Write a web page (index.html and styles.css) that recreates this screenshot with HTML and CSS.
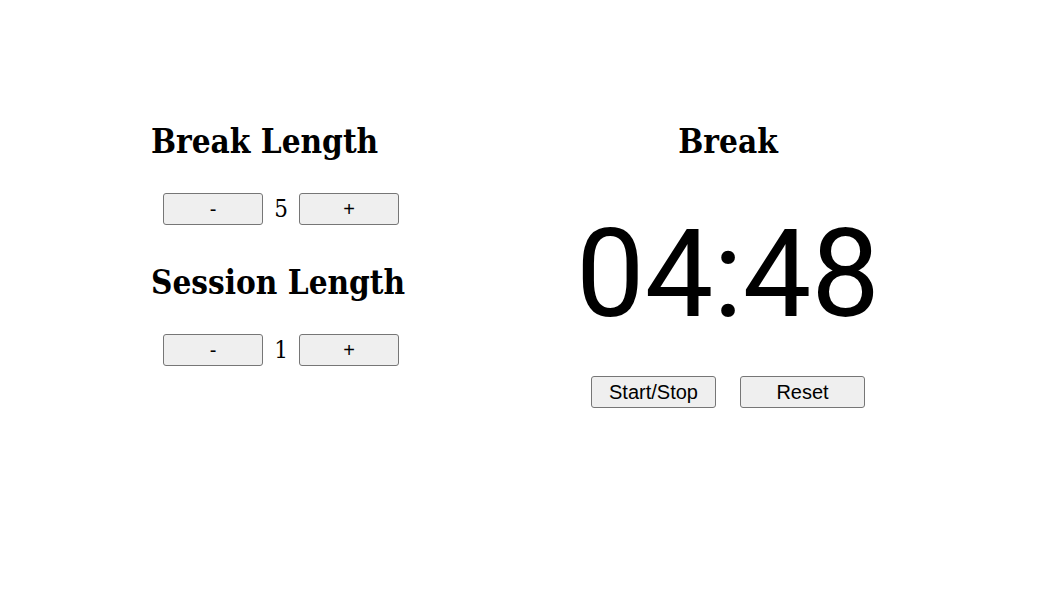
FILE: index.html
```html
<!DOCTYPE html>
<html>
<head>
<meta charset="utf-8">
<link rel="stylesheet" href="styles.css">
</head>
<body>
<main class="app">
  <section class="settings">
    <h2 class="label">Break Length</h2>
    <div class="control">
      <button class="btn small">-</button>
      <span class="value">5</span>
      <button class="btn small">+</button>
    </div>
    <h2 class="label">Session Length</h2>
    <div class="control">
      <button class="btn small">-</button>
      <span class="value">1</span>
      <button class="btn small">+</button>
    </div>
  </section>
  <section class="timer">
    <h2 class="label">Break</h2>
    <div class="time">04:48</div>
    <div class="actions">
      <button class="btn wide">Start/Stop</button>
      <button class="btn wide">Reset</button>
    </div>
  </section>
</main>
</body>
</html>
```
FILE: styles.css
```css
html, body {
  margin: 0;
  padding: 0;
  background: #fff;
}
body {
  font-family: "Roboto Slab", "DejaVu Serif Condensed", "DejaVu Serif", serif;
  font-stretch: condensed;
  color: #000;
}
.app {
  display: flex;
  align-items: flex-start;
  padding: 120px 0 0 151px;
  gap: 157px;
}
.settings {
  width: 260px;
  display: flex;
  flex-direction: column;
}
.label {
  margin: 0;
  font-size: 33px;
  font-weight: bold;
  line-height: 44px;
  white-space: nowrap;
}
.control {
  display: flex;
  align-items: center;
  justify-content: center;
  margin: 29px 0 36px;
}
.control:last-child {
  margin-bottom: 0;
}
.value {
  font-size: 24px;
  width: 36px;
  text-align: center;
}
.btn {
  font-family: "Liberation Sans", Arial, sans-serif;
  font-size: 20px;
  height: 32px;
  background: #efefef;
  border: 1px solid #767676;
  border-radius: 3px;
  color: #000;
  padding: 0;
}
.small {
  width: 100px;
}
.timer {
  width: 320px;
  display: flex;
  flex-direction: column;
  align-items: center;
}
.time {
  font-family: "Roboto Slab", Roboto, sans-serif;
  font-stretch: normal;
  font-size: 122px;
  line-height: 160px;
  margin-top: 31px;
}
.actions {
  display: flex;
  gap: 24px;
  margin-top: 21px;
}
.wide {
  width: 125px;
}
```
